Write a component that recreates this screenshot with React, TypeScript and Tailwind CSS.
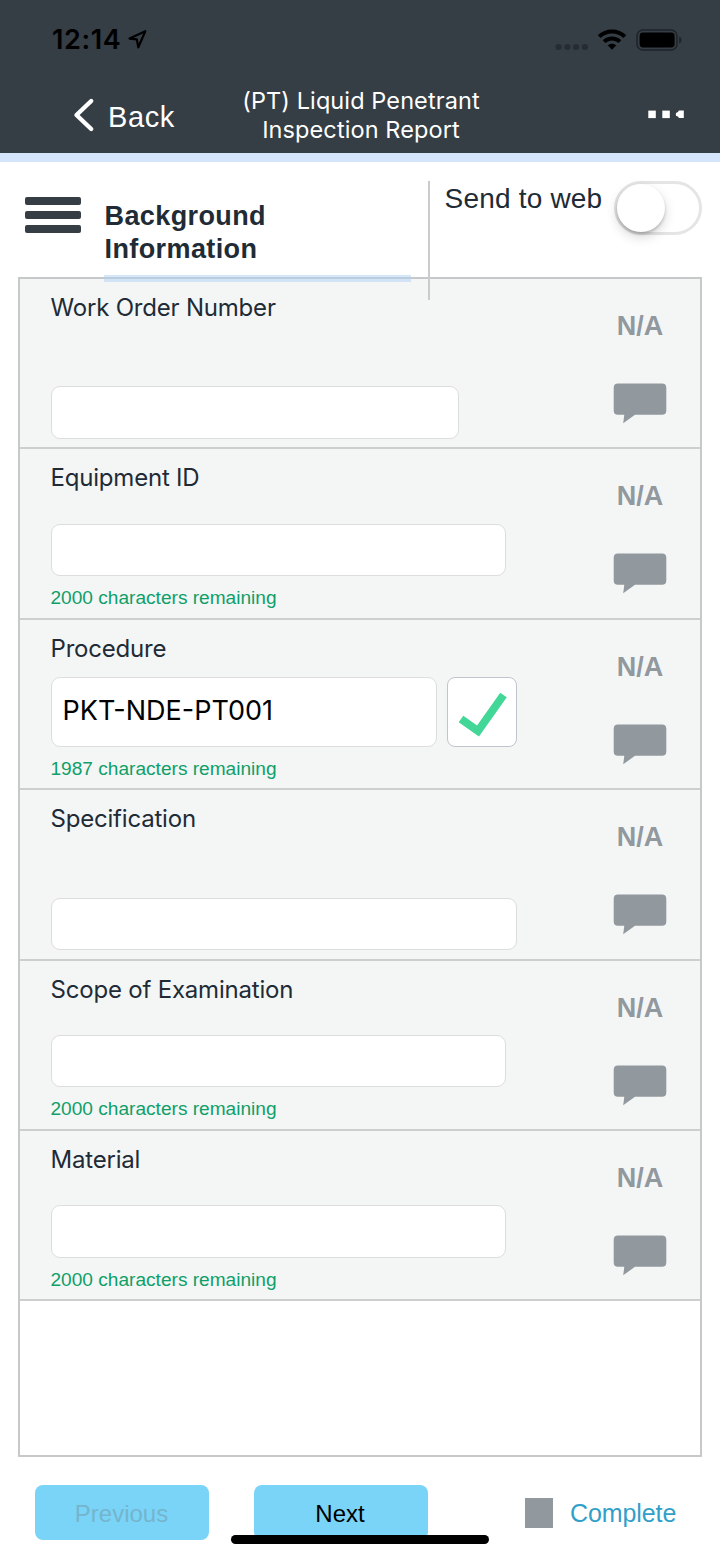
import React from 'react';

interface Field {
  label: string;
  value?: string;
  remaining?: number;
  inputClass: string;
}

const FIELDS: Field[] = [
  { label: 'Work Order Number', inputClass: 'w-[408.5px] h-[52.5px]' },
  { label: 'Equipment ID', remaining: 2000, inputClass: 'w-[455.5px] h-[52.5px]' },
  { label: 'Procedure', value: 'PKT-NDE-PT001', remaining: 1987, inputClass: 'w-[386px] h-[70px]' },
  { label: 'Specification', inputClass: 'w-[466px] h-[52.5px]' },
  { label: 'Scope of Examination', remaining: 2000, inputClass: 'w-[455.5px] h-[52.5px]' },
  { label: 'Material', remaining: 2000, inputClass: 'w-[455.5px] h-[52.5px]' },
];

const StatusBar: React.FC = () => (
  <div className="flex h-[80px] items-start justify-between pl-[52px] pr-[37px] pt-[24px]">
    <div className="flex items-center text-black">
      <span className="w-[70px] whitespace-nowrap text-[27px] font-semibold leading-[32px] tracking-[0.6px]">12:14</span>
      <svg className="ml-[5px] mt-[-2px] h-[22px] w-[22px]" viewBox="0 0 22 22" fill="none">
        <path d="M18.3 3.2 2.6 10.6 9.8 11.4 11.3 19.3Z" stroke="black" strokeWidth="2.2" strokeLinejoin="round" />
      </svg>
    </div>
    <div className="flex items-center pt-[5px]">
      <svg className="mt-[14px] h-[8px] w-[34px]" viewBox="0 0 34 8" fill="#262c32">
        <circle cx="3.6" cy="4" r="3.1" />
        <circle cx="12.4" cy="4" r="3.1" />
        <circle cx="21.1" cy="4" r="3.1" />
        <circle cx="29.9" cy="4" r="3.1" />
      </svg>
      <svg className="ml-[8px] mt-[-1px] h-[22px] w-[30px]" viewBox="0 0 30 22">
        <path d="M2.2 7.6C9.2 .7 20.8 .7 27.8 7.6" fill="none" stroke="black" strokeWidth="4" />
        <path d="M7.1 12.6C11.5 8.5 18.5 8.5 22.9 12.6" fill="none" stroke="black" strokeWidth="3.9" />
        <path d="M10.7 16.3C13.1 14.1 16.9 14.1 19.3 16.3L15 20.8Z" fill="black" />
      </svg>
      <svg className="ml-[9px] h-[22px] w-[47px]" viewBox="0 0 47 22">
        <rect x="1" y="1" width="40" height="20" rx="6" fill="none" stroke="#1e2328" strokeWidth="1.5" />
        <rect x="3.6" y="3.6" width="35" height="14.8" rx="3.4" fill="black" />
        <path d="M43.2 7.5C46.2 8.6 46.2 13.4 43.2 14.5Z" fill="#1e2328" />
      </svg>
    </div>
  </div>
);

const NavBar: React.FC = () => (
  <div className="flex h-[73px] text-white">
    <button className="flex h-[73px] w-[190px] items-center pl-[73px]">
      <svg className="mt-[-3px] h-[36px] w-[22px]" viewBox="0 0 22 36" fill="none">
        <path d="M18.2 4 3.5 18 18.2 32" stroke="white" strokeWidth="4.4" strokeLinecap="round" strokeLinejoin="round" />
      </svg>
      <span className="ml-[13px] mt-[1px] font-['Liberation_Sans',sans-serif] text-[29px] leading-[34px] tracking-[0.6px]">Back</span>
    </button>
    <h1 className="w-[342px] pt-[6px] text-center text-[23.5px] font-normal leading-[29px] tracking-[0.1px]">
      (PT) Liquid Penetrant
      <br />
      Inspection Report
    </h1>
    <svg className="ml-[115px] mt-[30px] h-[10px] w-[38px]" viewBox="0 0 38 10" fill="white">
      <rect x="1.3" y=".6" width="7.5" height="7.5" />
      <rect x="15.3" y=".6" width="7.5" height="7.5" />
      <path d="M36.8 .6H32Q31.2 2.4 29 3Q28.6 4.4 29 5.8Q31.2 6.3 32 8.1H36.8Z" />
    </svg>
  </div>
);

const SectionHeader: React.FC = () => (
  <div className="flex h-[115px]">
    <div className="flex w-[104.5px] flex-col gap-[6px] pl-[24.5px] pt-[34.5px]">
      <span className="h-[8px] w-[56px] rounded-[2px] bg-[#353d45]" />
      <span className="h-[8px] w-[56px] rounded-[2px] bg-[#353d45]" />
      <span className="h-[8px] w-[56px] rounded-[2px] bg-[#353d45]" />
    </div>
    <h2 className="w-[323px] whitespace-nowrap pt-[38px] font-['Liberation_Sans',sans-serif] text-[27px] font-bold leading-[33px] tracking-[0.4px] text-[#212b36]">
      Background
      <br />
      Information
    </h2>
    <div className="relative z-10 mt-[19px] h-[119px] w-[2px] bg-[#c9cbcc]" />
    <div className="ml-[15px] w-[169px] whitespace-nowrap pt-[20px] font-['Liberation_Sans',sans-serif] text-[28px] leading-[33px] tracking-[0.2px] text-[#212b36]">
      Send to web
    </div>
    <div className="mt-[19px] h-[54px] w-[88px] shrink-0 rounded-full border-[3px] border-[#e5e5e5]">
      <div className="h-[48px] w-[48px] rounded-full bg-white shadow-[0_5px_12px_rgba(0,0,0,0.16),0_2px_3px_rgba(0,0,0,0.2)]" />
    </div>
  </div>
);

const CommentIcon: React.FC = () => (
  <svg className="h-[41px] w-[54px]" viewBox="0 0 54 41">
    <path d="M5 .5H49Q53.3.5 53.3 4.8V27.5Q53.3 31.8 49 31.8H22L10.2 40.3 11.3 31.8H5Q.7 31.8.7 27.5V4.8Q.7.5 5 .5Z" fill="#91989e" />
  </svg>
);

const FieldRow: React.FC<{ field: Field }> = ({ field }) => (
  <div className="flex h-[170.4px] justify-between border-b-2 border-[#cdcfcf] bg-[#f4f6f6] pl-[30.5px] pr-[33px]">
    <div className="flex flex-col">
      <div className="pt-[14px] text-[24px] leading-[30px] tracking-[-0.2px] text-[#212b36]">{field.label}</div>
      <div className="mt-auto flex gap-[10px]">
        <div className={`flex items-center rounded-[9px] border border-[#dcdddd] bg-white pl-[11px] text-[27px] text-black ${field.inputClass}`}>
          {field.value}
        </div>
        {field.value && (
          <div className="h-[70px] w-[70px] rounded-[8px] border border-[#c0c4cc] bg-white">
            <svg className="h-[68px] w-[68px]" viewBox="0 0 68 68" fill="none">
              <path d="M13 41 30 53 55.5 17" stroke="#42d796" strokeWidth="8" />
            </svg>
          </div>
        )}
      </div>
      {field.remaining !== undefined ? (
        <div className="pb-[7.5px] pt-[10px] font-['Liberation_Sans',sans-serif] text-[19.1px] leading-[24px] text-[#0f9f68]">
          {field.remaining} characters remaining
        </div>
      ) : (
        <div className="h-[8.5px]" />
      )}
    </div>
    <div className="flex w-[54px] flex-col items-center pt-[31px]">
      <span className="font-['Liberation_Sans',sans-serif] text-[27px] font-bold leading-[32px] text-[#91989e]">N/A</span>
      <div className="mt-[41px]">
        <CommentIcon />
      </div>
    </div>
  </div>
);

const Footer: React.FC = () => (
  <div className="relative flex h-[101px] items-start pl-[35px] pt-[28px] font-['Liberation_Sans',sans-serif] text-[24px]">
    <button className="h-[55px] w-[174px] rounded-[8px] bg-[#79d4f8] pr-[1px] pt-[2px] text-[#75b4cc]">Previous</button>
    <button className="ml-[45px] h-[55px] w-[174px] rounded-[8px] bg-[#79d4f8] pr-[2px] pt-[2px] text-black">Next</button>
    <label className="ml-[97px] flex h-[55px] items-center text-[25px] tracking-[-0.1px] text-[#329fc9]">
      <span className="mr-[17px] h-[30px] w-[28px] bg-[#91989e]" />
      <span className="pt-[3px]">Complete</span>
    </label>
    {/* home indicator */}
    <div className="absolute left-[231px] top-[78px] h-[9px] w-[258px] rounded-full bg-black" />
  </div>
);

export default function App() {
  return (
    <div className="h-[1558px] w-[720px] overflow-hidden bg-white font-['Inter',sans-serif]">
      <header className="h-[162px] border-b-[9px] border-[#d4e4fa] bg-[#353d45]">
        <StatusBar />
        <NavBar />
      </header>
      <SectionHeader />
      <main className="relative mx-[18px] h-[1180px] border-2 border-[#c6c8c9]">
        {/* underline of the active section, sits over the list border */}
        <div className="absolute left-[84px] top-[-4px] h-[7px] w-[307px] bg-[#afcff6]/50" />
        {FIELDS.map((field) => (
          <FieldRow key={field.label} field={field} />
        ))}
      </main>
      <Footer />
    </div>
  );
}
